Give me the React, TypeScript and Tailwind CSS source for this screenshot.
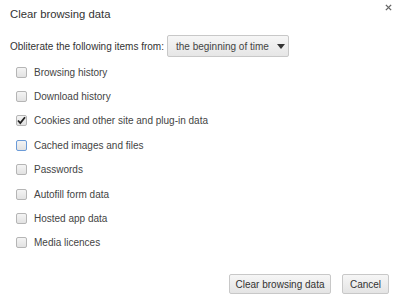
import React from "react";

const items: { label: string; checked?: boolean; focused?: boolean }[] = [
  { label: "Browsing history" },
  { label: "Download history" },
  { label: "Cookies and other site and plug-in data", checked: true },
  { label: "Cached images and files", focused: true },
  { label: "Passwords" },
  { label: "Autofill form data" },
  { label: "Hosted app data" },
  { label: "Media licences" },
];

function Box({ checked, focused }: { checked?: boolean; focused?: boolean }) {
  return (
    <div
      className={
        "relative w-[11px] h-[11px] shrink-0 rounded-[2px] border bg-gradient-to-b from-[#f4f4f4] to-[#e2e2e2] " +
        (focused ? "border-[#6b9bd8]" : "border-[#b5b5b5]")
      }
    >
      {checked && (
        <svg viewBox="0 0 11 11" className="absolute -left-[1px] -top-[1px] w-[11px] h-[11px]">
          <path d="M2 5.5 L4.3 8 L9 2.2" fill="none" stroke="#222" strokeWidth="1.8" />
        </svg>
      )}
    </div>
  );
}

export default function App() {
  return (
    <div
      className="w-[400px] h-[301px] bg-white relative text-[#333]"
      style={{ fontFamily: '"Liberation Sans", Arial, sans-serif' }}
    >
      <div className="absolute right-[8px] top-[4px]">
        <svg viewBox="0 0 8 8" className="w-[7px] h-[7px]">
          <path d="M1 1 L7 7 M7 1 L1 7" stroke="#666" strokeWidth="1.6" />
        </svg>
      </div>
      <div className="pl-[10px] pt-[6px] text-[11.3px] leading-[16px] text-[#333]">Clear browsing data</div>
      <div className="flex items-center pl-[10px] mt-[13px] h-[22px] whitespace-nowrap">
        <span className="text-[10px] text-[#333]">Obliterate the following items from:</span>
        <div className="ml-auto mr-[111px] shrink-0 h-[22px] w-[122px] flex items-center justify-between pl-[8px] pr-[3px] border border-[#c8c8c8] rounded-[2px] bg-gradient-to-b from-[#f6f6f6] to-[#e6e6e6] text-[10px] text-[#444]">
          <span>the beginning of time</span>
          <svg viewBox="0 0 8 5" className="w-[8px] h-[5px]">
            <path d="M0 0 L8 0 L4 5 Z" fill="#333" />
          </svg>
        </div>
      </div>
      <div className="flex flex-col pl-[16px] mt-[3px]">
        {items.map((it) => (
          <div key={it.label} className="flex items-center h-[24.4px] gap-[7px]">
            <Box checked={it.checked} focused={it.focused} />
            <span className="text-[10px] text-[#444]">{it.label}</span>
          </div>
        ))}
      </div>
      <div className="absolute right-[11px] top-[274px] flex gap-[11px]">
        <button className="h-[20px] w-[102px] border border-[#c8c8c8] rounded-[2px] bg-gradient-to-b from-[#f6f6f6] to-[#e4e4e4] text-[10px] text-[#333] whitespace-nowrap">
          Clear browsing data
        </button>
        <button className="h-[20px] w-[47px] border border-[#c8c8c8] rounded-[2px] bg-gradient-to-b from-[#f6f6f6] to-[#e4e4e4] text-[10px] text-[#333]">
          Cancel
        </button>
      </div>
    </div>
  );
}
